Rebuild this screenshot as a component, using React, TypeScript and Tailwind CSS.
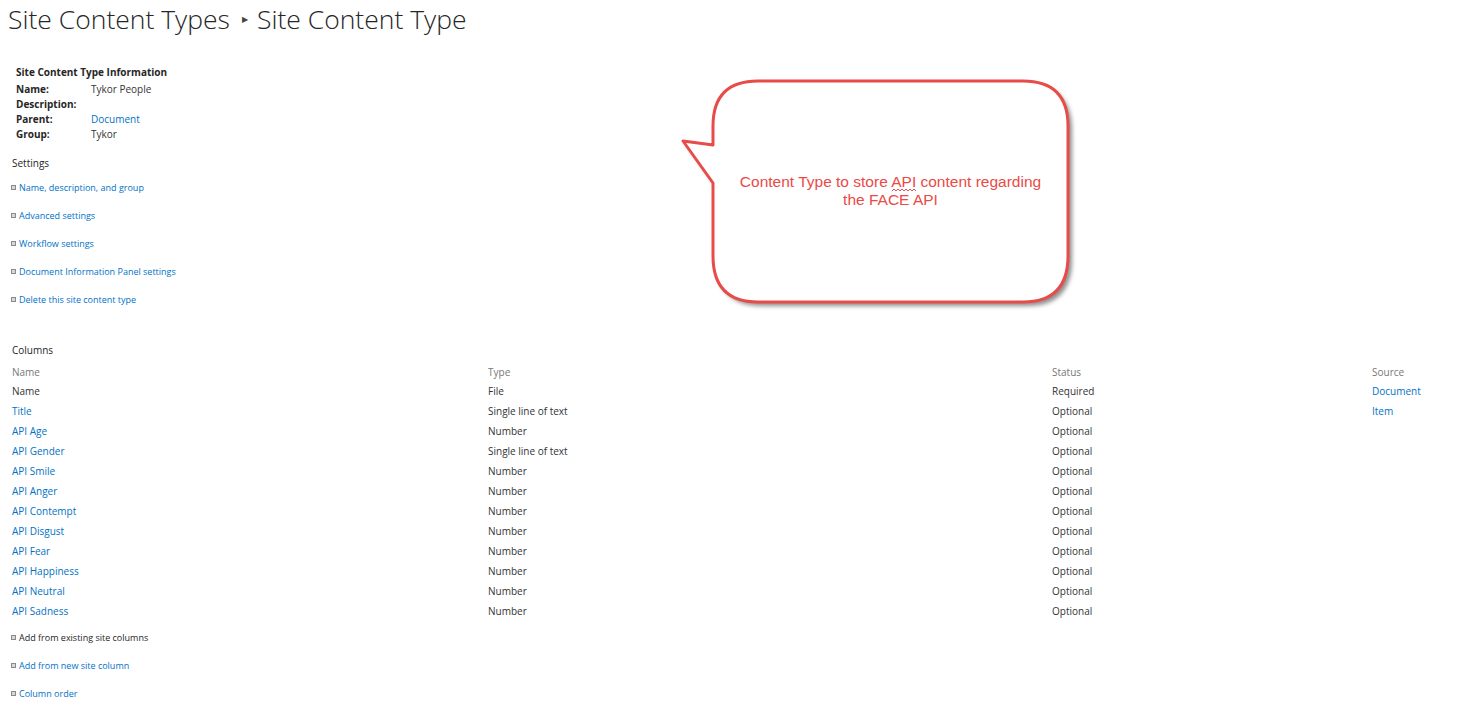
import React from "react";

const font = { fontFamily: '"Segoe UI", "Open Sans", "Noto Sans", sans-serif' };

const Bullet = () => (
    <span className="inline-block w-[5px] h-[5px] border border-[#8a8a8a] bg-[#d8d8d8] mr-[3px] mb-[1px]" />
);

const settings = [
    "Name, description, and group",
    "Advanced settings",
    "Workflow settings",
    "Document Information Panel settings",
    "Delete this site content type",
];

const columns: [string, string, string, string][] = [
    ["Title", "Single line of text", "Optional", "Item"],
    ["API Age", "Number", "Optional", ""],
    ["API Gender", "Single line of text", "Optional", ""],
    ["API Smile", "Number", "Optional", ""],
    ["API Anger", "Number", "Optional", ""],
    ["API Contempt", "Number", "Optional", ""],
    ["API Disgust", "Number", "Optional", ""],
    ["API Fear", "Number", "Optional", ""],
    ["API Happiness", "Number", "Optional", ""],
    ["API Neutral", "Number", "Optional", ""],
    ["API Sadness", "Number", "Optional", ""],
];

const bubble =
    "M 35 50 Q 35 5 80 5 L 345 5 Q 390 5 390 50 L 390 180 Q 390 226 345 226 L 80 226 Q 35 226 35 180 L 35 107 L 5 65 L 35 69 Z";

const Callout = () => (
    <div className="absolute left-[678px] top-[76px] w-[400px] h-[236px]">
        <svg width="400" height="236" className="absolute left-0 top-0">
            <defs>
                <filter id="sh" x="-10%" y="-10%" width="130%" height="130%">
                    <feGaussianBlur stdDeviation="2" />
                </filter>
            </defs>
            <path d={bubble} transform="translate(4 4)" fill="#8f8f8f" filter="url(#sh)" />
            <path d={bubble} fill="#ffffff" stroke="#e84c48" strokeWidth="3" strokeLinejoin="round" />
            {/* spell-check squiggle under "API" */}
            <path
                d="M 214 115 l 2 -2 l 2 2 l 2 -2 l 2 2 l 2 -2 l 2 2 l 2 -2 l 2 2 l 2 -2 l 2 2 l 2 -2 l 2 2"
                fill="none"
                stroke="#d9262c"
                strokeWidth="0.8"
            />
        </svg>
        <div
            className="absolute left-[35px] top-[5px] w-[355px] h-[220px] flex items-center justify-center text-center text-[15.5px] leading-[18px] text-[#ea4a45] px-[20px]"
            style={{ fontFamily: '"Liberation Sans", Arial, sans-serif' }}
        >
            <p>Content Type to store API content regarding the FACE API</p>
        </div>
    </div>
);

export default function App() {
    return (
        <div className="relative w-[1476px] h-[713px] bg-white overflow-hidden text-[10px] leading-[15px] text-[#333]" style={font}>
            <h1 className="pl-[8px] pt-[1px] h-[36px] text-[26.5px] leading-[36px] font-light text-[#262626] flex items-center">
                <span>Site Content Types</span>
                <span className="ml-[12px] mr-[9px] text-[8px] text-[#444]">▶</span>
                <span>Site Content Type</span>
            </h1>

            <div className="pl-[16px] mt-[29px]">
                <div className="font-bold text-[#262626] mb-[2px]">Site Content Type Information</div>
                <div className="grid grid-cols-[75px_1fr]">
                    <span className="font-bold text-[#262626]">Name:</span>
                    <span>Tykor People</span>
                    <span className="font-bold text-[#262626]">Description:</span>
                    <span></span>
                    <span className="font-bold text-[#262626]">Parent:</span>
                    <span className="text-[#0072c6]">Document</span>
                    <span className="font-bold text-[#262626]">Group:</span>
                    <span>Tykor</span>
                </div>
            </div>

            <div className="pl-[12px] mt-[14px] text-[#262626]">Settings</div>
            <div className="pl-[11px] mt-[9px] flex flex-col gap-[13px] text-[9px]">
                {settings.map((s) => (
                    <div key={s} className="flex items-center h-[15px]">
                        <Bullet />
                        <span className="text-[#0072c6]">{s}</span>
                    </div>
                ))}
            </div>

            <div className="pl-[12px] mt-[36px] text-[#262626]">Columns</div>
            <div className="pl-[12px] mt-[7px] grid grid-cols-[476px_564px_320px_1fr]">
                <div className="h-[19px] text-[#777]">Name</div>
                <div className="h-[19px] text-[#777]">Type</div>
                <div className="h-[19px] text-[#777]">Status</div>
                <div className="h-[19px] text-[#777]">Source</div>

                <div className="h-[20px]">Name</div>
                <div className="h-[20px]">File</div>
                <div className="h-[20px]">Required</div>
                <div className="h-[20px] text-[#0072c6]">Document</div>

                {columns.map(([n, t, s, src]) => (
                    <React.Fragment key={n}>
                        <div className="h-[20px] text-[#0072c6]">{n}</div>
                        <div className="h-[20px]">{t}</div>
                        <div className="h-[20px]">{s}</div>
                        <div className="h-[20px] text-[#0072c6]">{src}</div>
                    </React.Fragment>
                ))}
            </div>

            <div className="pl-[11px] mt-[6px] flex flex-col gap-[13px] text-[9px]">
                <div className="flex items-center h-[15px]">
                    <Bullet />
                    <span className="text-[#262626]">Add from existing site columns</span>
                </div>
                <div className="flex items-center h-[15px]">
                    <Bullet />
                    <span className="text-[#0072c6]">Add from new site column</span>
                </div>
                <div className="flex items-center h-[15px]">
                    <Bullet />
                    <span className="text-[#0072c6]">Column order</span>
                </div>
            </div>

            <Callout />
        </div>
    );
}
